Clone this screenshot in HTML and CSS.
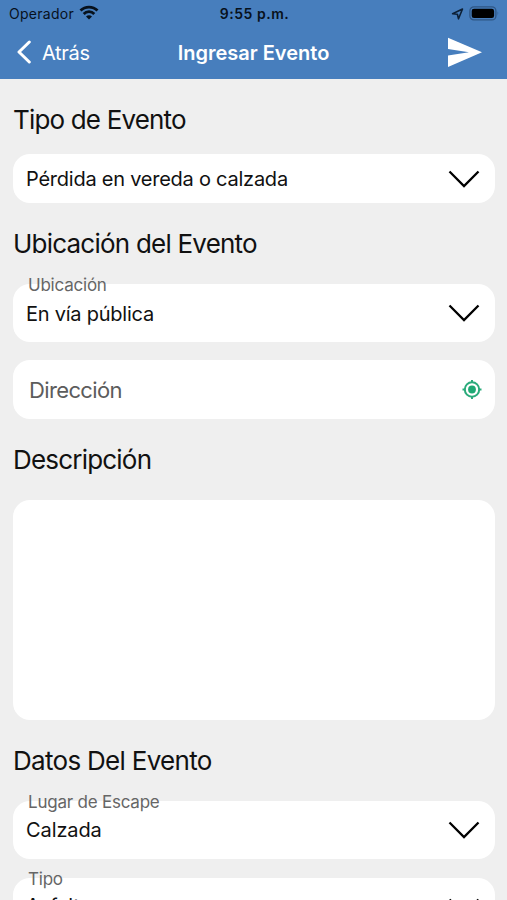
FILE: index.html
```html
<!DOCTYPE html>
<html lang="es">
<head>
<meta charset="utf-8">
<title>Ingresar Evento</title>
<link rel="stylesheet" href="styles.css">
</head>
<body>
<svg class="defs" aria-hidden="true">
  <symbol id="chevron" viewBox="0 0 32 18"><path d="M1.500 1.500 16 16 30.500 1.500" fill="none" stroke="#000" stroke-width="2.300"/></symbol>
</svg>
<header class="header">
  <div class="status">
    <div class="carrier"><span>Operador</span>
      <svg width="20" height="15" viewBox="0 0 20 15"><g fill="none" stroke="#07111c" stroke-width="2.800"><path d="M1.500 5.600a12 12 0 0 1 17 0M4.700 8.900a7.500 7.500 0 0 1 10.600 0"/></g><path d="M10 14.600 7 11.600a4.300 4.300 0 0 1 6 0z" fill="#07111c"/></svg>
    </div>
    <span class="clock">9:55 p.m.</span>
    <div class="indicators">
      <svg width="13" height="12" viewBox="0 0 13 12"><path d="M11.500 1 7.500 10.800 6.400 6.300 1.600 5.700z" fill="none" stroke="#0d2036" stroke-width="1.600" stroke-linejoin="round"/></svg>
      <svg width="31" height="15" viewBox="0 0 31 15"><rect x=".9" y=".9" width="26" height="13" rx="4" fill="none" stroke="#2f5684" stroke-width="1.300"/><rect x="2.700" y="2.700" width="22.400" height="9.400" rx="2.300"/><path d="M28.600 5.300q1.600 2.200 0 4.400z" fill="#2f5684"/></svg>
    </div>
  </div>
  <nav class="nav">
    <a class="back"><svg width="16" height="24" viewBox="0 0 16 24"><path d="M13.300 2 3 12l10.300 10" fill="none" stroke="#fff" stroke-width="3" stroke-linecap="round" stroke-linejoin="round"/></svg><span>Atrás</span></a>
    <h1 class="title">Ingresar Evento</h1>
    <svg class="send" width="36" height="32" viewBox="0 0 36 32"><path d="M1 .8 35 15.200 1 30V18.500L22 15.200 1 12z" fill="#fff"/></svg>
  </nav>
</header>
<main class="form">
  <h2 class="heading heading-tipo">Tipo de Evento</h2>
  <div class="field compact"><span class="value">Pérdida en vereda o calzada</span><svg class="chevron"><use href="#chevron"/></svg></div>
  <h2 class="heading heading-ubicacion">Ubicación del Evento</h2>
  <div class="field"><span class="label">Ubicación</span><span class="value">En vía pública</span><svg class="chevron"><use href="#chevron"/></svg></div>
  <div class="field address"><span class="placeholder">Dirección</span>
    <svg class="locate" width="20" height="20" viewBox="0 0 20 20"><g fill="none" stroke="#2bab7b" stroke-width="2"><circle cx="10" cy="9.500" r="7.200"/><path d="M10 0v3M10 16v3M.5 9.500h3M16.500 9.500h3"/></g><circle cx="10" cy="9.500" r="3.900" fill="#1fa974"/></svg>
  </div>
  <h2 class="heading heading-descripcion">Descripción</h2>
  <div class="field description"></div>
  <h2 class="heading heading-datos">Datos Del Evento</h2>
  <div class="field"><span class="label">Lugar de Escape</span><span class="value raised">Calzada</span><svg class="chevron"><use href="#chevron"/></svg></div>
  <div class="field last"><span class="label">Tipo</span><span class="value raised">Asfalto</span><svg class="chevron"><use href="#chevron"/></svg></div>
</main>
</body>
</html>
```
FILE: styles.css
```css
* { box-sizing: border-box; }
html, body { height: 100%; }
body {
  margin: 0;
  overflow: hidden;
  background: #efefef;
  color: #111;
  font-family: Inter, "Liberation Sans", sans-serif;
}
svg { display: block; flex: none; }
.defs { position: absolute; width: 0; height: 0; }
.header { height: 79px; background: #477ebd; }
.status {
  display: grid;
  grid-template-columns: 1fr auto 1fr;
  align-items: center;
  height: 27px;
  padding: 0 7px 0 9px;
  color: #07111c;
  font-size: 14px;
  line-height: 20px;
}
.carrier { display: flex; align-items: center; gap: 5px; letter-spacing: .28px; }
.carrier svg { margin-top: -2px; }
.clock { font-weight: 600; letter-spacing: .52px; }
.indicators { display: flex; justify-content: flex-end; align-items: center; gap: 5px; }
.nav {
  display: grid;
  grid-template-columns: 1fr auto 1fr;
  align-items: center;
  height: 52px;
  padding: 0 24px 0 16px;
  color: #fff;
  font-size: 20px;
  line-height: 24px;
}
.back { display: flex; align-items: center; gap: 10px; letter-spacing: -.3px; }
.back svg { margin-top: -2px; }
.title { margin: 0 -8px 0 0; font-size: 20px; font-weight: 600; }
.send { justify-self: end; }
.form { padding: 0 12px 0 13px; }
.heading { margin: 0; font-size: 26px; line-height: 32px; font-weight: 400; }
.heading-tipo { padding-top: 25px; letter-spacing: -.83px; }
.heading-ubicacion { padding-top: 25px; letter-spacing: -.78px; }
.heading-descripcion { padding-top: 25px; letter-spacing: -.8px; }
.heading-datos { padding-top: 25px; letter-spacing: -.7px; }
.field {
  position: relative;
  display: flex;
  align-items: center;
  justify-content: space-between;
  height: 58px;
  margin-top: 24px;
  padding: 0 15px 0 12px;
  border-radius: 17px;
  background: #fff;
}
.compact { height: 49px; margin-top: 18px; }
.address { height: 59px; margin-top: 18px; padding: 0 13px 0 16px; }
.description { height: 220px; }
.last { height: 57px; margin-top: 19px; }
.label {
  position: absolute;
  top: -9px;
  left: 15px;
  color: #666;
  font-size: 17px;
  line-height: 20px;
  letter-spacing: -.22px;
}
.value { padding: 1px 0 0 1px; font-size: 20px; line-height: 24px; letter-spacing: -.24px; }
.raised { padding: 0 0 1px 1px; letter-spacing: -.1px; }
.placeholder { color: #5c5c5c; font-size: 22px; line-height: 26px; letter-spacing: -.64px; }
.chevron { width: 32px; height: 18px; }
```
